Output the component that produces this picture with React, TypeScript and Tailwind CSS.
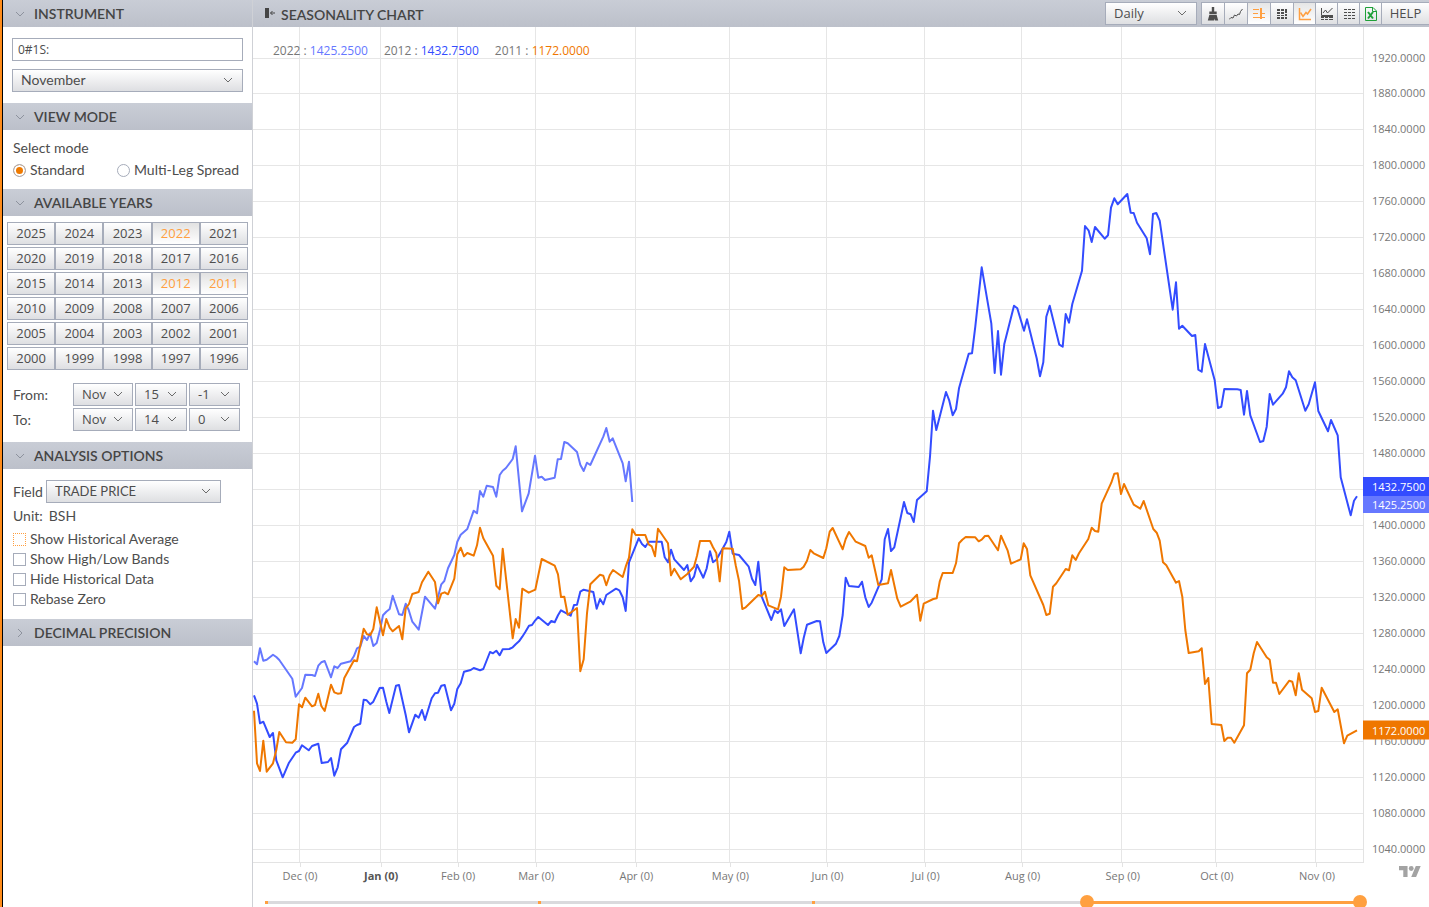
import { useState } from "react";
import type { ReactNode } from "react";

const YEARS = Array.from({ length: 30 }, (_, i) => 2025 - i);

const MONTHS = [
  { label: "Dec (0)", x: 299 },
  { label: "Jan (0)", x: 380, bold: true },
  { label: "Feb (0)", x: 457 },
  { label: "Mar (0)", x: 535 },
  { label: "Apr (0)", x: 635 },
  { label: "May (0)", x: 729 },
  { label: "Jun (0)", x: 826 },
  { label: "Jul (0)", x: 924 },
  { label: "Aug (0)", x: 1021 },
  { label: "Sep (0)", x: 1121 },
  { label: "Oct (0)", x: 1215 },
  { label: "Nov (0)", x: 1315 },
];

const PRICES = Array.from({ length: 23 }, (_, i) => 1920 - i * 40);

// Plot area in chart units
const PLOT = { left: 253, top: 27, width: 1110, height: 835 };

const priceY = (price: number) => Math.floor(58 + (1920 - price) * 0.8993) + 0.5;
const leftPct = (x: number) => `${((x - PLOT.left) / PLOT.width) * 100}%`;
const topPct = (y: number) => `${((y - PLOT.top) / PLOT.height) * 100}%`;

const SERIES_2022 =
  "254,661.3 257,664.3 260,648.3 263.3,660.7 266.7,659.7 273,654.7 276.3,657 279.3,660 292.3,678.7 295.7,696.7 302,688 305.3,674.7 312,675 315,676 318.3,665.7 321.3,662.3 324.7,661 331,677.3 334.3,666.3 337.7,668 341,663.7 350.7,661.3 354,656 357,648.3 360.3,646.7 363.7,636 367,640 370,633.3 373.3,646 376.7,643 380,630 383,615.3 386.3,611.7 389.7,609 392.7,595.7 399,614.3 402.3,615 405.7,603.7 408.7,610 412.3,621.7 418.7,629.7 425,596.7 435,608.7 441.3,584.3 444.3,581 448,568.3 454.3,555 457.3,541.7 460.7,534.7 467.3,529 473.7,510.7 477,513.3 480,491 483.3,496.7 486.7,485.7 493,487 496.3,496.7 499.7,475 502.7,470.7 506,468 512.7,459 515.7,446.3 522,511.3 528.7,493.3 535,455.7 538.3,477.7 541.7,476.7 545,480 554.7,477.7 557.7,459.3 561,459 564.3,442 567.7,443.3 577,452 580.3,464.7 583.7,471 587,462.7 590.3,465 603.3,436.7 606.3,428 609.7,441.7 612.7,438.3 622.7,463.3 625.7,481.3 629,461.7 632.3,502";

const SERIES_2012 =
  "254,695.3 257,703.7 260,723.3 263.3,721.7 269.7,737 273,733 276.3,760.3 282.7,777.3 289,762.7 295.7,752.7 299,751 302,745.3 308.7,750.3 312,746 318.3,743.7 321.7,763 328,762 331,758 334.3,775.7 337.7,767.3 341,749.3 347.3,742.7 354,727 357,725 360.3,723.7 363.7,699.7 366.7,700.3 370.3,704.3 373.3,701.7 379.7,688 383,687.7 386.3,701.7 389.3,713 396,685.7 399,685 405.7,715 409,732.3 415.3,714.7 418.7,717.7 422,710 425,720 431.7,698.3 435,693.3 438,692.7 441.3,685.7 444.7,685 451,710.3 454.3,703.7 457.3,689 460.7,683.3 464,671.7 470.7,670 473.7,668 480,670.3 483.3,669 490,652 493,653.3 496.3,650.7 499.7,655.3 502.7,649.3 509.3,649 512.7,647.3 515.7,644.3 519,641.3 522.3,636.7 525.3,632 529,625.7 532,625 535.3,620.3 538.3,617 548,625 551.3,621 554.7,622.3 558,615.3 561,610.3 570.7,615.7 574,605 577,604.7 580.3,591.7 583.7,589.7 593.3,592 596.7,608.7 600,599 603.3,604.3 606.3,595 616,588.7 619.3,590.3 622.7,597.3 625.7,611 629,562.3 638.7,538.3 642,544 645.3,547 648.7,541.7 661.7,541.7 664.7,557.3 668,562.3 671,549.7 674.3,559.3 684,570 687.3,565 690.7,581.3 694,576.7 697,564.7 703.3,577.7 706.7,568.3 710,551.3 713,562.3 716.3,559.7 723,548 726.3,542 729.3,531.7 732.7,553.7 739,555 748.7,566.7 752,578.7 755.3,585 758.3,561.7 761.7,596.7 771.3,620 774.7,610.3 777.7,613 781,609.3 784.3,626 794,609.3 800.7,653.3 803.7,638 807,624.7 816.7,621 820,621.3 823.3,642.3 826.3,653 836,643.7 839.3,636 842.7,615 845.7,577.7 849,586 858.7,587 862,581.7 865.3,597.3 868.7,607 871.7,602.7 881.7,579.3 884.7,539.3 888,529 891,551 894.3,547.3 904,502 907.3,513 910.7,514.3 913.7,522 917,500 926.7,491.3 930,456.7 933,410.7 936.3,430 946,392 949.3,400.7 952.7,415.3 956,409 959,388.3 968.7,353.7 972,353.3 975.3,326.7 981.7,267.3 991.3,323.3 994.7,373 998,331 1001,374.7 1004.3,344 1014,305.7 1017.3,308.3 1024,330.7 1027,319.3 1036.7,358.3 1040,376.3 1043.3,362.3 1046.3,316.7 1049.7,305.7 1059.3,344.7 1062.7,346.7 1065.7,314 1069,322.7 1072.3,304 1082,270.7 1085,226 1088.7,230.7 1091.7,242 1095,227 1104.7,238.7 1108,235.3 1111,207.7 1114.3,198.3 1117.7,204.3 1127.3,194 1130.7,212.7 1133.7,213 1137,222.7 1146.7,238.3 1150,254.3 1153,214 1156.3,213 1159.7,220.7 1172.7,309.7 1176,282.3 1179,328.7 1182.3,325.7 1192,336 1195.3,335 1198.3,369.7 1201.7,371.7 1205,344 1214.7,380.3 1218,408 1221.3,406.7 1224.3,389 1237.3,389.3 1240.7,390 1244,414.7 1247,391 1250.3,415.3 1260,442 1263.3,441 1266.7,426.7 1269.7,394 1273,404.7 1282.7,393.7 1286,387.3 1289,371.3 1292.3,377.3 1295.7,380.3 1305.3,410.7 1308.7,404.3 1315,382.3 1318.3,411 1328,431.3 1331,420 1337.7,435.3 1340.7,477.3 1350.7,515.3 1354,500.7 1357,496.3";

const SERIES_2011 =
  "254,710.7 257,763.3 260,771 263.3,740.7 266.7,771.7 273,763.3 276.3,750 279.3,732 286,742.3 292.3,742.7 295.7,739.3 299,704.3 302,707.3 305.3,697.7 312,706.3 315,705 318.3,693.7 321.3,706 324.7,711 331,684.7 334.3,692.3 337.7,693.7 341,693.3 344.3,678 354,660.3 357,661.3 363.7,628.7 367,634.3 370.3,635 373.3,629 376.7,607.3 383,635.3 386.3,619 389.7,627.7 392.7,631.3 399,626 402.3,639.3 405.7,608.3 409,604 412.3,594 418.7,592 422,582.3 428.3,571.7 435,582 438,603.3 441.3,593.7 444.7,592.3 448,594.3 454.3,578.7 457.3,554.3 460.7,547.7 464,556.3 467.3,553 473.7,555.7 477,545.3 480,527.7 483.3,538.3 493,555.7 496.3,585.7 499.7,589.3 502.7,548.7 512.7,638.3 515.7,619 519,627.7 522.3,588.7 528.7,592.7 535.3,589.7 541.7,559 554.7,565.7 558,574.3 561,597 564.3,596.7 567.7,614.7 577,608 580.3,671.3 583.7,659.3 587,613.3 590.3,584.3 600,574.7 603.3,575.7 606.3,585.3 609.7,575.3 613,570 622.7,577 625.7,566.7 629,557.7 632.3,529.3 635.7,535 645.3,535 648.7,544.3 651.7,546.3 655,556.3 658,528.7 668,543.3 671,575.3 674.3,568.7 680.7,579.3 687.3,574 694,566.7 697,555.7 700,541 710,541 713,547.3 716.3,553 719.7,581.3 722.7,548.3 732.7,548.7 735.7,565.3 739,580.7 742.3,609 745.7,607.3 758.3,595 761.7,596 765,591.7 768.3,605.3 778,609.3 781,596.7 784.3,567.3 787.7,570 800.7,569.3 803.7,566.7 807,560.7 810.3,550 813.7,553.3 823.3,558 826.3,548.3 829.7,531.7 832.7,528 842.7,549.3 845.7,539 849,532 855.7,541.7 865.3,546 868.7,557.7 871.7,555.3 878.3,585 888,583.3 891,570 897.3,598.7 900.7,606.7 910.7,601.3 917,594.7 920.3,620.7 923.7,603.7 933.3,599 936.7,598.3 939.7,581.7 942.7,573 952.7,573 956,563.3 959,543.3 962.3,539.7 965.7,537 975.3,537.3 978.7,541.3 981.7,539.7 985,536 988.3,535.7 998,550.3 1001,535.7 1007.7,550.7 1011,563.7 1020.7,559.3 1023.7,543.3 1027,549 1030.3,575.3 1043.3,605 1046.3,615 1049.7,613.7 1053,586.7 1056.3,583.3 1065.7,569 1069,570.3 1072.3,555.3 1075.7,560 1079,553.3 1088.3,539 1091.7,527.7 1095,531 1098.3,531.7 1101.7,503.7 1111.3,482.7 1114.3,473.7 1117.7,473.3 1121,494 1124,484 1133.7,504.7 1140.3,508.7 1143.7,501 1153.3,529 1156.7,532.7 1159.7,540.7 1163,562.3 1166.3,565.3 1176,582.7 1179,581 1182.3,596.7 1185.3,630 1188.7,653 1198.7,651.3 1201.7,648.3 1205,684 1208.3,678 1211.7,724 1221.3,725 1224.3,741 1227.7,737.7 1231,737.7 1234.3,742.7 1244,725.3 1247,673.3 1250.3,669.7 1253.7,653.3 1257,642 1266.7,657.3 1269.7,659.7 1273,682.7 1276,682.7 1279.3,694 1289.3,680.7 1292.3,681.7 1295.7,695.3 1298.7,673.3 1302,689.7 1311.7,698.3 1315,712 1318.3,711 1321.7,687.7 1334.3,712 1337.7,709.3 1344,743.3 1347.3,735.7 1357,730.3";

type SectionProps = {
  title: string;
  open?: boolean;
  children?: ReactNode;
};

const Section = ({ title, open = true, children }: SectionProps) => {
  const [expanded, setExpanded] = useState(open);
  return (
    <section>
      <h2>
        <button
          type="button"
          aria-expanded={expanded}
          onClick={() => setExpanded(!expanded)}
          className="flex h-[27px] w-full items-center gap-[9px] bg-linear-to-b from-[#c9cdd6] to-[#bcc0ca] pl-3 text-sm font-semibold text-[#454545]"
        >
          <svg
            viewBox="0 0 10 10"
            className={`h-[10px] w-[10px] ${expanded ? "" : "-rotate-90"}`}
            fill="none"
            stroke="#8d929d"
          >
            <path d="M1 3l4 4 4-4" />
          </svg>
          {title}
        </button>
      </h2>
      {expanded && children}
    </section>
  );
};

type DropdownProps = {
  label: string;
  options: string[];
  className?: string;
};

const Dropdown = ({ label, options, className = "" }: DropdownProps) => (
  <div className={`relative h-[23px] ${className}`}>
    <select
      aria-label={label}
      className="h-full w-full appearance-none border border-[#a6acba] bg-linear-to-b from-white to-[#dedfe2] pb-[2px] pl-2 leading-5 text-[#4d4d4d] outline-none"
    >
      {options.map((option) => (
        <option key={option}>{option}</option>
      ))}
    </select>
    <svg
      viewBox="0 0 10 10"
      className="pointer-events-none absolute top-[6px] right-[10px] h-[10px] w-[10px]"
      fill="none"
      stroke="#6b6b6b"
    >
      <path d="M1 3l4 4 4-4" />
    </svg>
  </div>
);

type ToolButtonProps = {
  label: string;
  active?: boolean;
  width?: string;
  children: ReactNode;
};

const ToolButton = ({ label, active = false, width = "w-6", children }: ToolButtonProps) => (
  <button
    type="button"
    aria-label={label}
    aria-pressed={active}
    className={`-ml-px flex h-[23px] items-center justify-center border border-[#a6acba] bg-linear-to-b ${width} ${
      active
        ? "from-[#e6e6e6] to-white text-[#ff9f40]"
        : "from-white to-[#dedfe2] text-[#4d4d4d]"
    }`}
  >
    <svg viewBox="0 0 14 14" className="h-[14px] w-[14px] shrink-0" fill="none" stroke="currentColor">
      {children}
    </svg>
  </button>
);

const Toolbar = () => (
  <div className="flex items-center font-['Open_Sans','Noto_Sans',sans-serif] text-[13px]">
    <Dropdown label="Interval" options={["Daily", "Weekly", "Monthly"]} className="mr-[5px] w-[92px]" />
    <ToolButton label="Theme">
      <g fill="currentColor" stroke="none">
        <path d="M5.800 0h2.400v4.500H5.800zM3.300 4.500h7.400v2.700H3.300zM3.300 8h7.400l1.500 5.500H8.900l-.4-2-.5 2H1.800z" />
      </g>
    </ToolButton>
    <ToolButton label="Line style">
      <path d="M0 12.500l2-2 2 .5L5.500 8l2 1L9 7l1.500.5 1-3L13.500 2" />
    </ToolButton>
    <ToolButton label="Price labels" active>
      <path d="M1 2.500h6M1 6.500h5M8 6.500h5M1 10.500h12" />
      <path d="M9 1v11" strokeWidth="2" />
    </ToolButton>
    <ToolButton label="Layout">
      <g fill="currentColor" stroke="none">
        <path d="M2 2h3v2H2zM6 2h3v2H6zM10 2h2v4h-2zM2 5h3v2H2zM6 5h3v2H6zM2 8h3v1H2zM6 8h3v1H6zM2 10h3v2H2zM6 10h3v2H6zM10 7h2v2h-2zM10 10h2v2h-2z" />
      </g>
    </ToolButton>
    <ToolButton label="Line chart" active width="w-[23px]">
      <path d="M1.500 1v11.500H13" strokeWidth="1.500" />
      <path d="M2.500 5.500L5 9.500l3-4 1.500 1.500L13 2" strokeWidth="1.500" />
    </ToolButton>
    <ToolButton label="Chart with table" width="w-[23px]">
      <path d="M1.500 1v7.500H13M3 6l2.500-3 2 3 2-2L12.500 1" />
      <path d="M1 10h3v1H1zM5 10h3v1H5zM9 10h4v1H9zM1 12h3v1H1zM5 12h3v1H5zM9 12h4v1H9z" fill="currentColor" stroke="none" />
      <path d="M1 9.500h12" />
    </ToolButton>
    <ToolButton label="Table" width="w-[23px]">
      <path d="M2 2.500h11M2 5.500h11M2 8.500h11M2 11.500h11" strokeDasharray="3 1" />
    </ToolButton>
    <ToolButton label="Export to Excel" width="w-[23px]">
      <g stroke="#1fa038">
        <path d="M1.500 .5h7.500l3.500 3.500v9.500h-11zM8.500 .5V4.500H12" />
        <path d="M4 5l5 6.500M9 5l-5 6.500" strokeWidth="2" />
      </g>
    </ToolButton>
    <button
      type="button"
      className="-ml-px h-[23px] w-[48px] border border-r-0 border-[#a6acba] bg-linear-to-b from-white to-[#dedfe2] pb-[2px] leading-5 text-[#4d4d4d]"
    >
      HELP
    </button>
  </div>
);

const Sidebar = () => {
  const [selected, setSelected] = useState([2022, 2012, 2011]);
  const toggle = (year: number) =>
    setSelected(
      selected.includes(year) ? selected.filter((y) => y !== year) : [...selected, year]
    );

  return (
    <aside className="w-[250px] shrink-0 border-r border-[#cfd1d6] text-sm">
      <Section title="INSTRUMENT">
        <div className="flex flex-col gap-2 px-[9px] py-[11px]">
          <input
            type="text"
            aria-label="Instrument"
            defaultValue="0#1S:"
            className="h-[23px] border border-[#a6acba] px-[5px] font-['Open_Sans','Noto_Sans',sans-serif] text-[12px] outline-none"
          />
          <Dropdown label="Contract month" options={["November", "December", "January"]} />
        </div>
      </Section>

      <Section title="VIEW MODE">
        <div className="px-[10px] pt-[7px] pb-2">
          <p className="mb-px leading-[21px]">Select mode</p>
          <div className="flex h-[22px] items-center">
            {["Standard", "Multi-Leg Spread"].map((mode, i) => (
              <label key={mode} className={`flex items-center gap-1 ${i === 0 ? "w-[104px]" : ""}`}>
                <input
                  type="radio"
                  name="mode"
                  defaultChecked={i === 0}
                  className="h-[13px] w-[13px] appearance-none rounded-full border border-[#a6acba] checked:bg-[#ef7a00] checked:shadow-[inset_0_0_0_2px_white]"
                />
                {mode}
              </label>
            ))}
          </div>
        </div>
      </Section>

      <Section title="AVAILABLE YEARS">
        <div className="grid grid-cols-5 gap-y-[2px] px-1 pt-[6px] font-['Open_Sans','Noto_Sans',sans-serif] text-[13px]">
          {YEARS.map((year) => (
            <button
              key={year}
              type="button"
              aria-pressed={selected.includes(year)}
              onClick={() => toggle(year)}
              className={`h-[23px] border border-[#a6acba] bg-linear-to-b pb-[2px] leading-5 ${
                selected.includes(year)
                  ? "from-[#e2e2e2] to-white text-[#ff9f40]"
                  : "from-white to-[#dedfe2] text-[#4d4d4d]"
              }`}
            >
              {year}
            </button>
          ))}
        </div>
        <div className="flex flex-col gap-[2px] px-[10px] pt-[13px] pb-[11px]">
          {[
            { label: "From:", day: "15", offset: "-1" },
            { label: "To:", day: "14", offset: "0" },
          ].map((row) => (
            <div key={row.label} className="flex items-center">
              <span className="w-[60px]">{row.label}</span>
              <div className="flex gap-[2px] font-['Open_Sans','Noto_Sans',sans-serif] text-[13px]">
                <Dropdown label={`${row.label} month`} options={["Nov", "Dec"]} className="w-[60px]" />
                <Dropdown label={`${row.label} day`} options={[row.day]} className="w-[52px]" />
                <Dropdown label={`${row.label} year offset`} options={[row.offset]} className="w-[51px]" />
              </div>
            </div>
          ))}
        </div>
      </Section>

      <Section title="ANALYSIS OPTIONS">
        <div className="px-[10px] pt-[11px] pb-[10px]">
          <div className="flex items-center">
            <span className="w-[33px]">Field</span>
            <Dropdown label="Field" options={["TRADE PRICE", "SETTLEMENT"]} className="w-[175px] text-[13px]" />
          </div>
          <p className="flex h-[26px] items-center gap-[6px]">
            <span>Unit:</span>
            <span>BSH</span>
          </p>
          {[
            "Show Historical Average",
            "Show High/Low Bands",
            "Hide Historical Data",
            "Rebase Zero",
          ].map((option, i) => (
            <label key={option} className="flex h-5 items-center gap-1">
              <input
                type="checkbox"
                className={`h-[13px] w-[13px] appearance-none border checked:bg-[#ef7a00] ${
                  i === 0 ? "border-dotted border-[#ff9f40]" : "border-[#a6acba]"
                }`}
              />
              {option}
            </label>
          ))}
        </div>
      </Section>

      <Section title="DECIMAL PRECISION" open={false} />
    </aside>
  );
};

const Legend = () => (
  <div className="absolute top-4 left-5 flex gap-4 text-[12px] leading-4">
    <span>
      2022 : <span className="text-[#6678ff]">1425.2500</span>
    </span>
    <span>
      2012 : <span className="text-[#334cff]">1432.7500</span>
    </span>
    <span>
      2011 : <span className="text-[#ef7700]">1172.0000</span>
    </span>
  </div>
);

const Plot = () => (
  <div className="relative min-w-0 flex-1 border-r border-b border-[#e3e3e3]">
    <svg
      viewBox={`${PLOT.left} ${PLOT.top} ${PLOT.width} ${PLOT.height}`}
      preserveAspectRatio="none"
      className="absolute inset-0 h-full w-full"
      fill="none"
      role="img"
      aria-label="Seasonality chart"
    >
      <g stroke="#e6e6e6">
        {PRICES.map((price) => (
          <path key={price} d={`M253 ${priceY(price)}H1363`} vectorEffect="non-scaling-stroke" />
        ))}
        {MONTHS.map(({ label, x }) => (
          <path key={label} d={`M${x + 0.5} 27V862`} vectorEffect="non-scaling-stroke" />
        ))}
      </g>
      <g strokeWidth="2" strokeLinejoin="round">
        <polyline points={SERIES_2022} stroke="#6678ff" vectorEffect="non-scaling-stroke" />
        <polyline points={SERIES_2012} stroke="#334cff" vectorEffect="non-scaling-stroke" />
        <polyline points={SERIES_2011} stroke="#ef7700" vectorEffect="non-scaling-stroke" />
      </g>
    </svg>
    <Legend />
  </div>
);

const PriceAxis = () => (
  <div className="relative w-[65px] shrink-0 text-[11px] leading-[18px]">
    {PRICES.filter((price) => price !== 1440).map((price) => (
      <span
        key={price}
        className="absolute left-2 -translate-y-1/2"
        style={{ top: topPct(priceY(price) - 1) }}
      >
        {price}.0000
      </span>
    ))}
    <div
      className="absolute right-0 -left-px -translate-y-1/2 leading-[17px] text-white"
      style={{ top: topPct(priceY(1432.75) - 2) }}
    >
      <div className="bg-[#334cff] pt-px pb-px pl-[9px]">1432.7500</div>
      <div className="bg-[#6678ff] pl-[9px]">1425.2500</div>
    </div>
    <div
      className="absolute right-0 -left-px -translate-y-1/2 bg-[#ef7700] pt-px pl-[9px] text-white"
      style={{ top: topPct(priceY(1172) - 1) }}
    >
      1172.0000
    </div>
  </div>
);

const TimeAxis = () => (
  <div className="flex h-7 shrink-0 text-[11px]">
    <div className="relative flex-1">
      {MONTHS.map(({ label, x, bold }) => (
        <div
          key={label}
          className="absolute top-0 flex w-16 -translate-x-1/2 flex-col items-center"
          style={{ left: leftPct(x + 1) }}
        >
          <span className="h-1 w-px bg-[#e3e3e3]" />
          <span className={`leading-[18px] ${bold ? "font-bold text-[#555555]" : ""}`}>{label}</span>
        </div>
      ))}
    </div>
    <div className="w-[65px] pt-[3px] pl-[35px]">
      <svg viewBox="0 4 36 18" className="h-[11px] w-[22px]" fill="#a3a3a3" aria-label="TradingView">
        <path d="M14 22H7V11H0V4h14v18zM28 22h-8l7.500-18h8L28 22z" />
        <circle cx="20" cy="8" r="4" />
      </svg>
    </div>
  </div>
);

const THUMB =
  "pointer-events-none absolute inset-0 h-[14px] w-full appearance-none bg-transparent [&::-webkit-slider-thumb]:pointer-events-auto [&::-webkit-slider-thumb]:h-[14px] [&::-webkit-slider-thumb]:w-[14px] [&::-webkit-slider-thumb]:appearance-none [&::-webkit-slider-thumb]:rounded-full [&::-webkit-slider-thumb]:bg-[#ffa040]";

const RangeSlider = () => {
  const [range, setRange] = useState([75, 100]);
  return (
    <div className="h-4 shrink-0 overflow-hidden pt-1 pr-[62px] pl-[6px]">
      <div className="relative h-[14px]">
        <div className="flex h-full items-center px-[6px]">
          <div className="relative flex h-[3px] w-full justify-between bg-[#dadadd]">
            {[0, 25, 50, 75, 100].map((stop) => (
              <span key={stop} className="h-[3px] w-[3px] bg-[#ffa040]" />
            ))}
            <div
              className="absolute inset-y-0 bg-[#ffa040]"
              style={{ left: `${range[0]}%`, right: `${100 - range[1]}%` }}
            />
          </div>
        </div>
        <input
          type="range"
          aria-label="Range start"
          value={range[0]}
          onChange={(e) => setRange([Number(e.target.value), range[1]])}
          className={THUMB}
        />
        <input
          type="range"
          aria-label="Range end"
          value={range[1]}
          onChange={(e) => setRange([range[0], Number(e.target.value)])}
          className={THUMB}
        />
      </div>
    </div>
  );
};

const App = () => {
  return (
    <div className="flex h-screen overflow-hidden border-l-2 border-[#ff8c1a] bg-white font-['Lato',sans-serif] text-[#4d4d4d]">
      <div className="w-px shrink-0 bg-black" />
      <Sidebar />
      <main className="flex min-w-0 flex-1 flex-col">
        <header className="flex h-[27px] shrink-0 items-center justify-between bg-linear-to-b from-[#c9cdd6] to-[#bcc0ca] pl-3">
          <h1 className="flex items-center gap-[6px] pt-[2px] text-sm font-semibold text-[#454545]">
            <svg viewBox="0 0 10 10" className="mb-1 h-[10px] w-[10px]" fill="none" stroke="#454545">
              <path d="M0 0h4v10H0z" fill="#454545" stroke="none" />
              <path d="M5.500 5H10M7.500 3l-2 2 2 2" />
            </svg>
            SEASONALITY CHART
          </h1>
          <Toolbar />
        </header>
        <div className="flex min-h-0 flex-1 flex-col font-['Open_Sans','Noto_Sans',sans-serif] text-[#777777]">
          <div className="flex min-h-0 flex-1">
            <Plot />
            <PriceAxis />
          </div>
          <TimeAxis />
          <RangeSlider />
        </div>
      </main>
    </div>
  );
};

export default App;
